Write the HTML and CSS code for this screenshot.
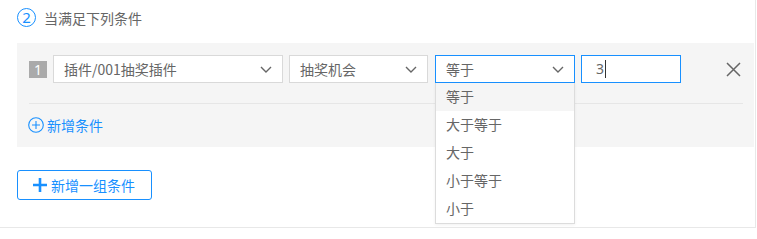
FILE: index.html
```html
<!DOCTYPE html>
<html lang="zh">
<head>
<meta charset="utf-8">
<link rel="stylesheet" href="styles.css">
</head>
<body>
<div class="card">
  <div class="step-title">
    <span class="step-num">2</span>
    <span class="step-text">当满足下列条件</span>
  </div>
  <div class="group">
    <div class="row">
      <span class="badge">1</span>
      <div class="select w1">
        <span class="select-text">插件/001抽奖插件</span>
        <svg class="chev" width="12" height="7" viewBox="0 0 12 7"><path d="M1 1l5 5 5-5" fill="none" stroke="#666" stroke-width="1.4"/></svg>
      </div>
      <div class="select w2">
        <span class="select-text">抽奖机会</span>
        <svg class="chev" width="12" height="7" viewBox="0 0 12 7"><path d="M1 1l5 5 5-5" fill="none" stroke="#666" stroke-width="1.4"/></svg>
      </div>
      <div class="select w3 focused">
        <span class="select-text">等于</span>
        <svg class="chev" width="12" height="7" viewBox="0 0 12 7"><path d="M1 1l5 5 5-5" fill="none" stroke="#666" stroke-width="1.4"/></svg>
        <ul class="dropdown">
          <li class="active">等于</li>
          <li>大于等于</li>
          <li>大于</li>
          <li>小于等于</li>
          <li>小于</li>
        </ul>
      </div>
      <div class="input focused"><span class="input-text">3</span><span class="caret"></span></div>
      <svg class="close" width="15" height="15" viewBox="0 0 15 15"><path d="M1 1L14 14M14 1L1 14" stroke="#666" stroke-width="1.5" fill="none"/></svg>
    </div>
    <div class="divider"></div>
    <div class="add-cond">
      <svg width="16" height="16" viewBox="0 0 16 16"><circle cx="8" cy="8" r="7.3" fill="none" stroke="#1890ff" stroke-width="1.1"/><path d="M8 4v8M4 8h8" stroke="#1890ff" stroke-width="1.1"/></svg>
      <span>新增条件</span>
    </div>
  </div>
  <div class="btn">
    <svg width="14" height="14" viewBox="0 0 14 14"><path d="M7 0v14M0 7h14" stroke="#1890ff" stroke-width="2.6"/></svg>
    <span>新增一组条件</span>
  </div>
</div>
</body>
</html>
```

FILE: styles.css
```css
* { box-sizing: border-box; }
body {
  margin: 0;
  background: #fff;
  font-family: "Noto Sans CJK SC", "Liberation Sans", sans-serif;
  font-size: 14px;
  color: #666;
}
.card {
  width: 756px;
  height: 228px;
  border-right: 1px solid #e8e8e8;
  border-bottom: 1px solid #e8e8e8;
  padding-left: 17px;
  padding-right: 0;
}
.step-title {
  height: 43px;
  display: flex;
  align-items: center;
  padding-bottom: 8px;
}
.step-num {
  width: 19px;
  height: 19px;
  border: 1px solid #1890ff;
  border-radius: 50%;
  color: #1890ff;
  font-size: 15px;
  line-height: 17px;
  text-align: center;
  font-family: "Noto Sans", sans-serif;
}
.step-text {
  margin-left: 8px;
  color: #666;
  line-height: 18px;
}
.group {
  width: 737px;
  height: 104px;
  background: #f5f5f5;
  padding: 12px 11px 0 12px;
}
.row {
  display: flex;
  align-items: center;
  height: 28px;
}
.badge {
  width: 18px;
  height: 17px;
  background: #aaa;
  color: #fff;
  font-size: 14px;
  line-height: 17px;
  text-align: center;
  font-family: "Noto Sans", sans-serif;
  margin-right: 6px;
}
.select, .input {
  position: relative;
  height: 28px;
  background: #fff;
  border: 1px solid #d9d9d9;
  display: flex;
  align-items: center;
  padding: 0 10px;
}
.select-text { flex: 1; color: #666; line-height: 26px; }
.w1 { width: 230px; margin-right: 6px; }
.w2 { width: 139px; margin-right: 7px; }
.w3 { width: 140px; margin-right: 6px; }
.focused { border-color: #1890ff; }
.chev { flex: none; }
.input { width: 100px; padding-left: 14px; }
.input-text { font-family: "Noto Sans", sans-serif; color: #666; line-height: 26px; }
.caret { width: 1px; height: 18px; background: #333; margin-left: 1px; }
.close { margin-left: 45px; }
.dropdown {
  position: absolute;
  top: 27px;
  left: -1px;
  width: 140px;
  margin: 0;
  padding: 0;
  list-style: none;
  background: #fff;
  border: 1px solid #dcdcdc;
  border-top: none;
  box-shadow: 0 1px 3px rgba(0,0,0,0.06);
  z-index: 10;
}
.dropdown li {
  height: 28px;
  line-height: 27px;
  padding-left: 10px;
  color: #666;
}
.dropdown li.active { background: #f5f5f5; }
.divider {
  height: 1px;
  background: #e6e6e6;
  margin-top: 20px;
}
.add-cond {
  display: flex;
  align-items: center;
  height: 42px;
  color: #1890ff;
  margin-left: -1px;
}
.add-cond span { margin-left: 3px; }
.btn {
  margin-top: 23px;
  width: 135px;
  height: 30px;
  border: 1px solid #1890ff;
  border-radius: 3px;
  display: flex;
  align-items: center;
  padding-left: 15px;
  color: #1890ff;
}
.btn span { margin-left: 4px; }
```
